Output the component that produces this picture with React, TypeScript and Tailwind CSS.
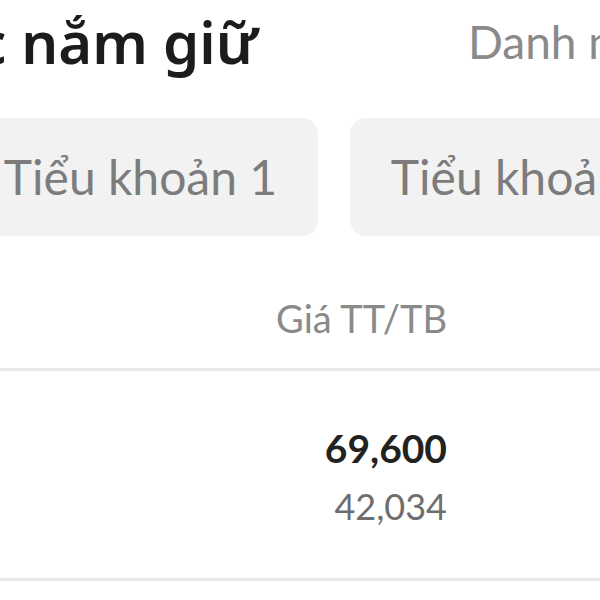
export default function App() {
  const accounts = ['Tiểu khoản 1', 'Tiểu khoản 2'];
  return (
    <div className="w-[600px] h-[600px] overflow-hidden bg-white font-['Lato',sans-serif]">
      {/* header: title + tab */}
      <div className="flex items-center h-[84px] ml-[-281px] whitespace-nowrap">
        <h1 className="font-['Noto_Sans',sans-serif] text-[58px] leading-none font-semibold text-[#1c1c1c]">
          Danh mục nắm giữ
        </h1>
        <span className="ml-[210px] text-[46px] leading-none text-[#8a8a8a]">Danh mục theo dõi</span>
      </div>

      {/* sub accounts */}
      <div className="flex gap-[32px] mt-[34px] ml-[-37px] whitespace-nowrap">
        {accounts.map((a) => (
          <button
            key={a}
            className="shrink-0 w-[355px] h-[118px] rounded-[16px] bg-[#f2f2f2] text-[48px] text-[#7c7c7c] flex items-center justify-center"
          >
            {a}
          </button>
        ))}
      </div>

      {/* table header */}
      <div className="flex justify-end pr-[153px] mt-[52px] h-[80px] items-center pb-[20px]">
        <span className="text-[38px] leading-none text-[#8a8a8a]">Giá TT/TB</span>
      </div>
      <div className="h-[3px] bg-[#e8e8e8]" />

      {/* row */}
      <div className="flex flex-col items-end pr-[153px] pt-[58px] h-[207px]">
        <span className="text-[39px] leading-none font-bold text-[#222]">69,600</span>
        <span className="text-[36px] leading-none mt-[20px] text-[#6e6e6e]">42,034</span>
      </div>
      <div className="h-[3px] bg-[#e8e8e8]" />
    </div>
  );
}
